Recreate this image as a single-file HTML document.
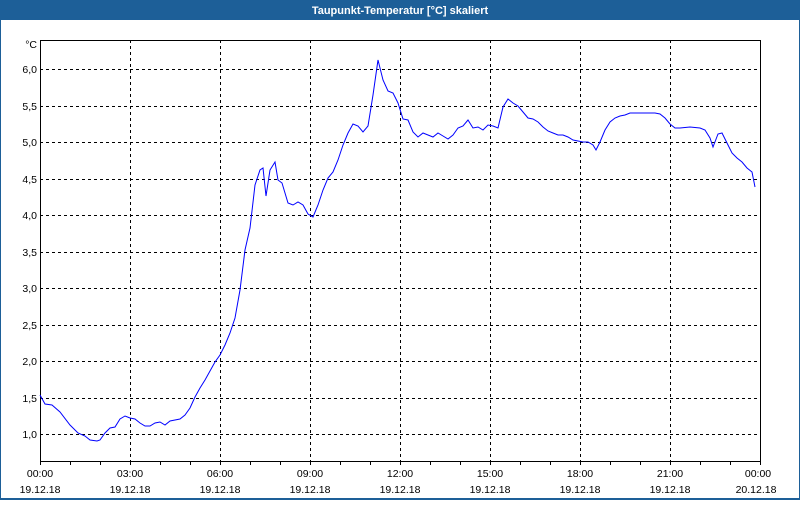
<!DOCTYPE html>
<html><head><meta charset="utf-8"><style>
body{margin:0;width:800px;height:500px;overflow:hidden;background:#fff;font-family:"Liberation Sans",sans-serif}
</style></head><body>
<svg width="800" height="500" xmlns="http://www.w3.org/2000/svg" font-family="Liberation Sans, sans-serif" font-size="10.5">
<rect x="0" y="0" width="800" height="500" fill="#1d5f98"/>
<rect x="1" y="20" width="798" height="478" fill="#fff"/>
<text x="400" y="14" fill="#fff" font-weight="bold" font-size="11" text-anchor="middle">Taupunkt-Temperatur [°C] skaliert</text>
<g stroke="#000" stroke-dasharray="3,3" stroke-width="1">
<line x1="40" y1="69.5" x2="760" y2="69.5"/><line x1="40" y1="106.5" x2="760" y2="106.5"/><line x1="40" y1="142.5" x2="760" y2="142.5"/><line x1="40" y1="179.5" x2="760" y2="179.5"/><line x1="40" y1="215.5" x2="760" y2="215.5"/><line x1="40" y1="252.5" x2="760" y2="252.5"/><line x1="40" y1="288.5" x2="760" y2="288.5"/><line x1="40" y1="325.5" x2="760" y2="325.5"/><line x1="40" y1="361.5" x2="760" y2="361.5"/><line x1="40" y1="398.5" x2="760" y2="398.5"/><line x1="40" y1="434.5" x2="760" y2="434.5"/>
<line x1="130.5" y1="40" x2="130.5" y2="461"/><line x1="220.5" y1="40" x2="220.5" y2="461"/><line x1="310.5" y1="40" x2="310.5" y2="461"/><line x1="400.5" y1="40" x2="400.5" y2="461"/><line x1="490.5" y1="40" x2="490.5" y2="461"/><line x1="580.5" y1="40" x2="580.5" y2="461"/><line x1="670.5" y1="40" x2="670.5" y2="461"/>
</g>
<g stroke="#000" stroke-width="1" fill="none">
<path d="M40.5 40.5H760.5V461.5H40.5Z"/>
<path d="M40.5 461v4M70.5 461v4M100.5 461v4M130.5 461v4M160.5 461v4M190.5 461v4M220.5 461v4M250.5 461v4M280.5 461v4M310.5 461v4M340.5 461v4M370.5 461v4M400.5 461v4M430.5 461v4M460.5 461v4M490.5 461v4M520.5 461v4M550.5 461v4M580.5 461v4M610.5 461v4M640.5 461v4M670.5 461v4M700.5 461v4M730.5 461v4M760.5 461v4"/>
</g>
<polyline fill="none" stroke="#0000ff" stroke-width="1" points="40,395 45,404 52,405 60,412 70,425 78,433 85,436 90,440 97,441 100,440 105,433 110,428 115,427 120,419 125,416 130,418 135,419 140,423 145,426 150,426 155,423 160,422 165,425 170,421 180,419 185,415 190,408 195,397 200,388 205,380 210,371 215,362 220,355 225,345 230,333 235,318 240,290 245,250 250,228 255,185 260,170 263,168 266,196 270,170 275,162 278,180 282,183 288,203 293,205 298,202 303,205 308,214 313,217 318,205 323,190 328,178 333,172 338,160 343,145 348,133 353,124 358,126 363,132 368,126 373,95 378,60 383,80 388,91 393,93 398,103 403,119 408,120 413,132 418,137 423,133 428,135 433,137 438,133 443,136 448,139 453,135 458,128 463,126 468,120 473,128 478,127 483,130 488,125 493,126 498,128 503,107 508,99 513,103 518,106 523,112 528,118 533,119 538,122 543,127 548,131 553,133 558,135 563,135 568,137 573,140 578,141 583,142 588,142 593,145 596,150 600,142 605,130 610,122 615,118 620,116 625,115 630,113 640,113 655,113 660,114 665,118 670,124 675,128 680,128 690,127 700,128 705,130 710,138 713,147 718,134 722,133 727,143 732,153 737,158 742,162 747,168 752,172 755,187"/>
<g fill="#000" text-anchor="end">
<text x="37" y="48">°C</text>
<text x="37" y="73">6,0</text><text x="37" y="110">5,5</text><text x="37" y="146">5,0</text><text x="37" y="183">4,5</text><text x="37" y="219">4,0</text><text x="37" y="256">3,5</text><text x="37" y="292">3,0</text><text x="37" y="329">2,5</text><text x="37" y="365">2,0</text><text x="37" y="402">1,5</text><text x="37" y="438">1,0</text>
</g>
<g fill="#000" text-anchor="middle">
<text x="40" y="477">00:00</text><text x="40" y="493">19.12.18</text>
<text x="130" y="477">03:00</text><text x="130" y="493">19.12.18</text>
<text x="220" y="477">06:00</text><text x="220" y="493">19.12.18</text>
<text x="310" y="477">09:00</text><text x="310" y="493">19.12.18</text>
<text x="400" y="477">12:00</text><text x="400" y="493">19.12.18</text>
<text x="490" y="477">15:00</text><text x="490" y="493">19.12.18</text>
<text x="580" y="477">18:00</text><text x="580" y="493">19.12.18</text>
<text x="670" y="477">21:00</text><text x="670" y="493">19.12.18</text>
<text x="758" y="477">00:00</text><text x="756" y="493">20.12.18</text>
</g>
</svg>
</body></html>
